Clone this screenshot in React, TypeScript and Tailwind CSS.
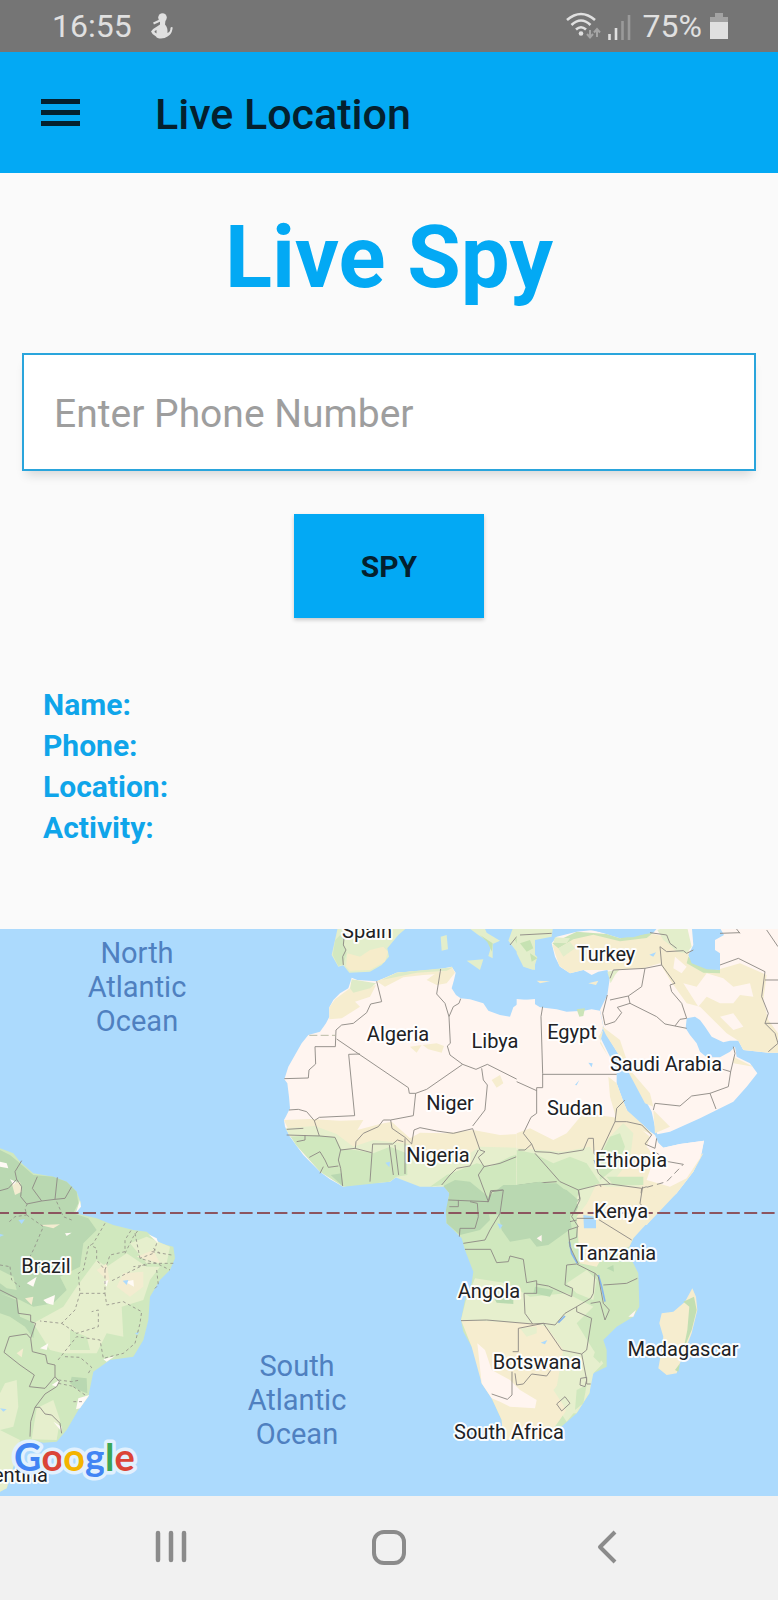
import React from "react";

const FONT = "font-['Roboto','Liberation_Sans',sans-serif]";

const labels: { text: string; x: number; y: number }[] = [
  { text: "Spain", x: 367, y: 9 },
  { text: "Turkey", x: 606, y: 32 },
  { text: "Algeria", x: 398, y: 112 },
  { text: "Libya", x: 495, y: 119 },
  { text: "Egypt", x: 572, y: 110 },
  { text: "Saudi Arabia", x: 666, y: 142 },
  { text: "Niger", x: 450, y: 181 },
  { text: "Sudan", x: 575, y: 186 },
  { text: "Nigeria", x: 438, y: 233 },
  { text: "Ethiopia", x: 631, y: 238 },
  { text: "Kenya", x: 621, y: 289 },
  { text: "Tanzania", x: 616, y: 331 },
  { text: "Angola", x: 489, y: 369 },
  { text: "Botswana", x: 537, y: 440 },
  { text: "Madagascar", x: 683, y: 427 },
  { text: "South Africa", x: 509, y: 510 },
  { text: "Brazil", x: 46, y: 344 },
];

const oceans: { lines: string[]; x: number; y: number }[] = [
  { lines: ["North", "Atlantic", "Ocean"], x: 137, y: 34 },
  { lines: ["South", "Atlantic", "Ocean"], x: 297, y: 447 },
];

const border = { fill: "none", stroke: "#8f8b85", strokeWidth: 2.8, strokeLinejoin: "round" as const };
const stateLine = { ...border, strokeDasharray: "9 8", strokeWidth: 2.4 };

function NorthWestAfrica() {
  return (
    <g transform="translate(270 -9) scale(.33333)">
      <path fill="#e3eecb" d="M205 15L195 60 185 105 205 140 220 136 238 158 300 155 335 135 357 110 352 85 385 45 420 15Z" />
      <path fill="#f6ecca" d="M232 100L270 110 300 90 340 80 354 95 345 125 300 150 240 152 228 140Z" />
      <path fill="#d3e8c0" d="M196 60L225 30 222 75 230 100 220 132 205 138 188 105Z" />
      <path fill="#e3eecb" d="M512 50L530 45 534 88 515 92ZM585 15L625 45 652 62 662 85 655 108 668 115 668 72 690 62 650 38 640 15ZM590 122L640 118 630 150ZM715 62L732 15H795V150L765 140 768 122 738 92Z" />
      <path fill="#c6e2b2" d="M630 45L668 70 666 95 652 66ZM735 60L760 30 780 50 775 95 750 88Z" />
      <path fill="#fff5f0" d="M245 173L262 180 320 184 350 172 380 158 420 155 470 155 510 147 545 140 557 158 552 180 545 205 558 225 572 235 600 238 640 250 655 272 690 285 720 290 730 262 760 240 795 237V910H530L535 840 538 820 520 795 490 800 470 790 445 768 420 765 380 770 360 785 300 790 260 790 220 800 180 778 150 755 120 725 100 705 78 675 60 650 45 620 42 600 50 585 60 565 57 530 52 490 43 478 55 440 75 405 95 370 115 345 150 335 168 310 178 290 178 262 190 240 210 220 235 205 240 190Z" />
      <path fill="#f6edcf" d="M240 205L318 196 300 230 255 245 270 260 215 295 178 298 178 262 195 238ZM320 184L380 158 510 147 505 162 460 165 400 172 345 200ZM490 165L545 140 555 158 530 190 500 195 470 180ZM420 380L455 375 440 398ZM458 375L500 370 522 378 515 398 475 388ZM665 480L690 465 700 490 680 503Z" />
      <path fill="#deebc7" d="M240 205L245 178 318 190 300 205 250 218ZM335 180L380 158 550 142 530 152 440 158Z" />
      <path fill="#f6edcf" d="M42 600L120 597 210 602 280 600 262 630 330 612 365 605 420 655 450 638 530 640 610 630 690 645 795 640V740L640 745 500 780 420 700 250 700 60 640Z" />
      <path fill="#e6efcd" d="M47 625L135 618 200 642 250 680 310 660 420 672 420 700 600 700 630 680 795 685V800H450L60 650Z" />
      <path fill="#d0e8be" d="M62 650L140 645 195 652 215 688 255 690 310 700 360 680 410 700 412 765 380 770 360 785 220 800 150 755 78 675ZM480 800L530 765 570 750 620 730 660 740 720 710 795 685V910H530L538 820 520 795Z" />
      <path fill="#b9d8b1" d="M538 820L520 798 555 780 600 785 655 830 700 795 795 795V910H530ZM182 765L215 760 218 798Z" />
      <path fill="#acdafd" d="M346 728L360 725 358 742Z" />
      <path {...border} d="M320 184L335 245 302 252 290 278 250 310 215 315 198 330 196 380 135 380 137 432 117 450 115 474 43 476M200 357L415 503 418 520 437 520 470 508 578 433 540 405 532 378 541 370 537 290 525 250 500 222 512 147M537 290L550 260 567 250 572 236M578 433L618 448 652 433 795 505M635 445L640 480 652 495 645 570 608 618M437 520L430 587 362 600 366 625 405 652 425 672 432 630 450 623 500 633 550 640 608 626 630 690 645 695 625 712 642 740 690 730 740 710 795 685M270 402L236 403 254 587 148 592 133 602 110 575 85 568 57 570M133 602L148 648 50 645M148 648L195 652 212 690 255 685 305 698M362 600L340 600 325 620 280 640 258 665 256 685M308 672L300 785M308 672L368 672 382 660 400 665M358 675L370 765M375 675L386 765M405 655L405 762M212 690L205 720 212 745 218 798M160 740L150 760M118 712L150 695 165 720 175 742 205 738M80 665L105 660 105 645M50 628L100 625M515 795L540 765 560 745 600 738 625 690M642 740L625 765 655 845 542 838M655 845L665 815 700 810M535 862L565 862 565 840M600 838L605 850 620 852 620 900M222 55L220 75 228 90 218 110 220 135M720 75L740 50 780 40" />
      <path {...border} strokeDasharray="24 10" stroke="#b5b79f" d="M118 346H196" />
    </g>
  );
}

function NorthEastAfrica() {
  return (
    <g transform="translate(520 -9) scale(.33333)">
      <path fill="#fff5f0" d="M-10 237L25 240 60 262 110 268 140 275 190 272 215 268 240 272 250 320 240 350 270 410 290 460 290 490 310 545 325 580 370 620 405 645 415 668 430 683 480 672 552 662 545 700 520 755 470 820 420 860 380 915H-10Z" />
      <path fill="#fff5f0" d="M95 70L110 50 170 35 220 30 260 42 300 55 360 52 400 38 420 15H795V398H745L670 390 655 362 630 362 610 367 575 350 555 320 540 300 525 290 500 295 497 325 510 345 530 370 540 395 560 412 600 412 630 395 645 380 650 410 690 430 712 460 680 500 640 545 590 570 540 595 450 635 412 643 405 620 395 575 360 510 330 460 300 410 260 345 250 318 240 270 262 225 270 170 262 150 235 155 215 165 190 150 150 160 120 140 105 110Z" />
      <path fill="#f6edcf" d="M97 75L170 40 260 45 300 60 400 42 480 60 520 110 540 130 590 150 660 130 740 165 730 240 745 300 774 340V398H745L670 390 655 362 620 340 580 300 540 260 500 250 450 180 420 130 370 145 270 150 190 150 150 160 118 138Z" />
      <path fill="#fff5f0" d="M490 190L530 200 560 160 610 175 640 200 690 190 700 230 660 225 640 250 600 250 560 230 535 260ZM600 290L640 280 670 320 640 330ZM465 110L500 140 485 160 460 145Z" />
      <path fill="#f6edcf" d="M245 318L300 360 330 450 390 520 400 560 375 550 330 465 300 410 258 345ZM400 570L450 620 405 640ZM640 410L700 440 640 430ZM265 470L290 490 320 570 370 615 400 645 290 600 270 530ZM250 330L235 350 265 410 240 370Z" />
      <path fill="#cbe4b8" d="M97 70L170 35 260 42 300 55 400 38 380 54 300 64 220 44 160 58 115 85ZM170 268L195 265 190 288 178 290ZM505 110L540 138 600 150 600 160 550 158 500 130Z" />
      <path fill="#e3eecb" d="M412 30L440 20 500 15 515 80 500 100 470 95 450 75 430 60ZM262 155L300 147 285 165 272 190ZM115 85L150 65 165 85 130 110Z" />
      <path fill="#e3eecb" d="M-10 15H100L95 50 45 60 32 90 52 112 40 150 10 140 -10 100ZM105 52L150 55 140 70 100 68Z" />
      <path fill="#c6e2b2" d="M0 70L30 60 40 85 20 95ZM30 100L52 115 35 125Z" />
      <path fill="#acdafd" d="M120 15L200 15 400 20 385 38 340 52 295 52 250 38 200 28 130 40ZM515 15H595L612 45 585 60 585 90 600 100 600 150 560 148 515 130 505 105 520 75ZM388 104L408 97 400 110Z" />
      <path fill="#f6edcf" d="M50 182L90 184 60 190ZM205 190L235 182 228 195ZM-10 640L30 625 100 660 140 640 190 580 270 590 330 600 390 650 380 680 420 720 400 780 550 700 520 755 470 820 380 915H-10Z" />
      <path fill="#fff5f0" d="M412 668L430 683 480 672 552 662 540 715 500 775 450 800 380 780 400 720 385 680Z" />
      <path fill="#e6efcd" d="M-10 685L60 690 130 695 210 680 230 720 260 660 310 610 340 640 330 720 290 770 370 800 260 800 230 790 170 915H-10Z" />
      <path fill="#d0e8be" d="M-10 690L40 700 100 730 150 710 200 730 240 790 180 810 160 860 190 915H-10ZM270 650L300 640 315 680 290 740 240 780 235 720ZM260 770L370 770 370 795 280 795Z" />
      <path fill="#b9d8b1" d="M-10 800L40 790 110 790 160 830 175 860 150 915H-10Z" />
      <path {...border} d="M68 260L63 290 68 460V503H50V580L33 592 10 640 35 672 15 690 -5 690M68 463H290M-10 485L50 512M35 672L45 695 90 697 115 702 190 690 205 655 220 655 222 700 235 715M45 700L120 785 175 810 235 795 270 792 365 805 380 800M175 810L180 835 155 860 155 900M235 715L245 690 285 605 320 605 365 615 395 645M285 605L290 565 315 540M395 645L375 672 405 685 410 655M405 695L445 725 490 733M222 720L235 760 270 792M365 805L360 850 380 880M240 795L250 815M-10 797L40 790 110 785M270 240L325 228 330 250 410 290 435 312 500 325M325 228L365 200 375 145 280 150 270 175M375 145L425 135 465 190 450 195 455 215 485 250 500 295 480 298 465 318M330 250L292 262 305 278 285 305 255 315 248 280 262 225M425 135L420 80 440 95 490 92 500 100 520 90M390 38L440 45 450 70 470 85M405 550L480 558 515 528 570 520 625 500 632 455 605 447M570 520L588 567M405 550L400 570M632 455L645 400 640 380M600 135L655 115 735 155 725 230 745 280 735 310 765 340 774 370 745 395M735 180H795M735 310H795M640 15L660 40M600 40L660 38M740 30L774 80M0 45L95 40" />
      <path {...border} strokeDasharray="20 12" d="M380 802L440 785 490 733" />
      <path fill="#acdafd" d="M205 428L218 430 215 442ZM165 495L178 480 170 496Z" />
    </g>
  );
}

function SouthernAfrica() {
  return (
    <g transform="translate(420 221) scale(.33333)">
      <path fill="#d0e8be" d="M90 195L470 190 690 195 680 210 640 265 628 290 635 330 655 370 658 470 640 500 590 530 550 570 560 600 560 650 520 670 510 690 508 730 470 790 430 825 380 865 250 870 245 810 215 745 185 700 175 640 155 590 130 545 123 510 135 450 155 400 160 365 135 300 125 265 80 220 78 185Z" />
      <path fill="#b9d8b1" d="M78 180L88 130 130 100 200 150 210 210 180 240 120 255 80 220ZM250 110L360 95 440 120 475 150 450 200 455 235 385 285 350 290 330 265 270 275 245 240 235 190Z" />
      <path fill="#e6efcd" d="M165 385L260 400 330 440 440 430 520 470 470 520 520 600 550 640 520 670 508 730 440 815 300 600 123 510 138 450ZM440 400L500 360 530 390 520 450 470 430Z" />
      <path fill="#f6edcf" d="M470 200L540 110 640 130 680 130 740 155 640 265 628 290 560 300 530 350 480 340ZM123 510L340 520 380 530 430 600 470 640 400 720 440 780 380 865 250 870 245 810 215 745 185 700 155 590Z" />
      <path fill="#e6efcd" d="M430 600L500 610 530 650 510 690 508 730 470 790 440 790 410 710ZM300 535L350 530 350 550 320 560Z" />
      <path fill="#d0e8be" d="M470 720L500 705 490 760 465 780ZM530 590L555 600 540 640 520 620Z" />
      <path fill="#fff5f0" d="M172 580L195 600 215 660 270 690 300 720 350 750 345 775 270 770 240 755 215 745 185 700ZM625 500L648 480 640 500ZM350 265L365 255 365 275Z" />
      <path fill="#b9dab0" d="M345 410L400 420 390 440 340 430ZM220 440L280 445 280 462 230 458ZM560 355L580 345 582 365Z" />
      <path fill="#f6edcf" d="M817 415L828 440 832 480 815 550 780 640 770 670 740 675 715 655 725 600 730 560 718 520 725 490 760 485 795 455Z" />
      <path fill="#c3dfb2" d="M822 440L830 480 815 540 790 600 802 540 808 470 790 455ZM780 640L775 665 765 660Z" />
      <path fill="#acdafd" d="M490 195L528 200 528 235 492 235ZM362 578L382 570 375 583ZM232 220L248 225 240 238Z" />
      <path fill="none" stroke="#83b4f0" strokeWidth="5" d="M448 275L455 310 472 340M535 375L545 410 555 455M415 518L435 498" />
      <path {...border} d="M85 150L205 155 212 122 250 120 240 190 210 240 195 270 130 280M150 155L172 160 175 200 165 235 120 235 118 260M88 170H115V150M135 298H212L230 338 265 335 270 318 310 328 320 398 350 392 350 430 312 430 315 490 338 522 370 520M123 512L200 510 338 522M350 402L385 408 455 440 458 415 435 405 440 345 470 342 525 370 520 430 512 445 470 470 435 490 405 525 370 520 425 600 485 612 500 600 515 505 470 485 470 470M525 370L535 380 550 460 568 480 555 510 540 455 512 460M550 405L620 400 652 385M475 120L480 150 455 200 475 230 445 240 450 290 475 342M470 205H530L635 270M450 215L470 210M448 270L470 262 472 230M295 605V535L370 520M278 605H295M276 665V735L262 748 215 732M285 670L290 705 310 702 335 672 380 678 400 650 425 655M485 612L500 690 495 710 480 705 482 685 500 682 500 702H512M410 762L435 740 450 760 425 783ZM668 110L660 160 680 185" />
    </g>
  );
}

function SouthAmerica() {
  return (
    <g transform="translate(0 191) scale(.33333)">
      <path fill="#d0e8be" d="M0 85L40 100 60 125 100 160 160 170 200 185 230 215 243 250 225 280 290 295 340 315 400 330 440 335 480 370 520 380 525 415 510 450 480 480 450 530 445 600 430 660 400 710 330 720 280 755 265 830 235 870 200 930 170 965 130 968 95 960 60 1000 40 1040 20 1105 0 1115Z" />
      <path fill="#b9d8b1" d="M0 90L30 105 60 130 100 165 160 170 200 185 230 215 235 250 220 280 265 295 290 330 250 370 240 440 180 470 200 510 160 550 100 560 60 540 0 520ZM0 520L50 540 60 590 105 610 100 655 75 620 30 590 0 580ZM215 770L260 775 262 820 235 810 210 790Z" />
      <path fill="#e6efcd" d="M230 500L190 560 100 610 150 690 190 700 290 700 320 640 370 650 365 560 430 540 450 480 480 440 440 440 380 400 320 440 290 420ZM15 790L50 780 55 860 40 920 0 930V820ZM110 865L160 840 180 900 170 960 95 958ZM0 930L60 960 40 1040 20 1105 0 1115ZM390 370L440 350 510 380 500 430 440 430Z" />
      <path fill="#d0e8be" d="M0 450L40 470 50 510 20 505 0 490ZM210 630L260 650 270 690 210 690Z" />
      <path fill="#f3ecd0" d="M35 190L60 185 65 215 45 225ZM75 535L100 530 95 555ZM120 315L180 313 160 325ZM50 700L70 685 65 712ZM370 460L430 455 430 500 390 530 350 500ZM290 450L320 430 330 490ZM410 410L460 390 480 430Z" />
      <path fill="#fffaf5" d="M0 125L20 130 25 145 0 140ZM80 490L110 470 100 500ZM130 540L165 525 160 555 140 550ZM30 178L50 185 40 195ZM120 685L145 670 140 690ZM195 340L215 338 200 348ZM445 343L470 355 475 370ZM240 240L243 260 228 278ZM375 485L400 480 402 500ZM235 835L268 825 240 865 228 868ZM155 795L178 780 170 800ZM160 905L185 920 185 935ZM310 485L325 480 320 500ZM310 718L345 708 320 725Z" />
      <path fill="#acdafd" d="M0 342L12 345 0 350ZM55 300L75 298 65 312ZM368 482L385 480 380 495ZM0 865L20 868 10 875ZM405 640L418 635 412 645Z" />
      <path {...border} d="M0 212L25 205 50 178 45 155 65 122M50 178L65 200 62 230 80 252 125 243 97 205 112 170M125 243L165 238 172 172M165 238L195 235 215 200M0 510L50 535 55 580 92 585 92 605 107 610 92 655 97 695 137 705 142 730 165 735 165 770 135 805 88 800 103 765 60 735 12 697 28 650 80 642 92 655M165 770L178 785 170 800 135 822 105 862 92 905 90 950M105 862L120 862 135 882 155 885 180 910 185 940" />
      <path {...stateLine} d="M28 305L45 290 80 285 75 265 82 252M80 285L130 320 100 390 90 410M170 245L190 290 215 300M30 440L35 480 60 500M0 435L30 440M315 310L280 370 265 380 250 450 235 460 240 520 315 520 315 450 290 420 290 385 270 375M315 450L330 405 375 395 375 360 395 328M375 400L400 350 415 330M405 340L420 415 470 430 510 450M470 370L460 400 420 415M455 395L515 405M460 385L480 400M520 430L440 430 360 470 330 485M470 450L475 495 460 510M440 435L400 440M240 520L225 570 185 610 120 603M185 610L230 640 295 620 295 570 275 575M315 520L320 555 370 545 425 575 420 610 405 670 370 700 310 715 300 660 230 650 170 725M195 710L240 712 275 742 265 760M175 790L225 800M175 780L215 785 240 780M220 800L255 825M220 845L250 845" />
    </g>
  );
}

function GoogleMark() {
  const letters: [string, string][] = [
    ["G", "#4285f4"],
    ["o", "#db4437"],
    ["o", "#f4b400"],
    ["g", "#4285f4"],
    ["l", "#3aa757"],
    ["e", "#db4437"],
  ];
  const type = "font-['Lato','Open_Sans',sans-serif] font-bold";
  return (
    <text x="14" y="542" fontSize="38" className={type} stroke="#e2f1fd" strokeWidth="7" strokeLinejoin="round" paintOrder="stroke">
      {letters.map(([char, color], i) => (
        <tspan key={i} fill={color}>{char}</tspan>
      ))}
    </text>
  );
}

function WorldMap() {
  return (
    <svg viewBox="0 0 778 567" preserveAspectRatio="xMidYMid slice" className="block h-full min-h-0 w-full" role="img" aria-label="Map">
      <rect width="778" height="567" fill="#acdafd" />
      <SouthAmerica />
      <NorthWestAfrica />
      <NorthEastAfrica />
      <SouthernAfrica />
      <line x1="0" x2="778" y1="284" y2="284" stroke="#8c5560" strokeWidth="2" strokeDasharray="13 4.4" strokeDashoffset="4" />
      <g fontSize="20" fill="#202124" textAnchor="middle" stroke="#fffffff0" strokeWidth="4" strokeLinejoin="round">
        {labels.map((l) => (
          <text key={l.text} x={l.x} y={l.y} paintOrder="stroke">{l.text}</text>
        ))}
        <text x="48" y="553" textAnchor="end" paintOrder="stroke">Argentina</text>
      </g>
      <g fontSize="29" fill="#4f80c0" textAnchor="middle">
        {oceans.map((o) =>
          o.lines.map((line, i) => (
            <text key={o.y + line} x={o.x} y={o.y + i * 34}>{line}</text>
          ))
        )}
      </g>
      <GoogleMark />
    </svg>
  );
}

function StatusBar() {
  return (
    <div className="flex h-[52px] shrink-0 items-center justify-between bg-[#757575] pr-[50px] pl-[52px] text-[32px] leading-none text-[#e0e0e0]">
      <div className="flex items-center gap-[18px]">
        <span>16:55</span>
        <svg width="24" height="26" viewBox="0 0 24 26" aria-hidden="true">
          <circle cx="12.500" cy="4.500" r="4.300" fill="#e0e0e0" />
          <path
            fill="#e0e0e0"
            fillRule="evenodd"
            d="M10 7H15.500L15 11.500Q18 14.500 17.500 20 20.500 19 20.500 15 20.500 14 22 14 23 14 22.500 16 21.500 21.500 17.500 23.500 15 25.500 11 25.500 7 25.500 6 23.500 2 21.500 1 18.500 3 15.500 7 13.500L10 11.500ZM6.500 17Q4 18 4.500 19L6.500 20.500Z"
          />
          <path d="M3.500 10.500L10 7.500" stroke="#e0e0e0" strokeWidth="2" />
        </svg>
      </div>
      <div className="flex items-center gap-2">
        <svg width="65" height="28" viewBox="0 0 65 28" fill="none" aria-hidden="true">
          <g stroke="#e0e0e0" strokeWidth="2.600">
            <path d="M1 8Q15 -4 29 8" />
            <path d="M5.500 13Q15 4 24.500 13" />
            <path d="M10 17.500Q15 13 20 17.500" />
          </g>
          <circle cx="15" cy="21.500" r="2.300" fill="#e0e0e0" />
          <path d="M24 18V25M21 22L24 25.500 27 22M31 25V17M28 20.500L31 17 34 20.500" stroke="#a5a5a5" strokeWidth="2" />
          <path d="M43.500 22V28M50 16V28" stroke="#e0e0e0" strokeWidth="2.600" />
          <path d="M56.500 9V28M63 3V28" stroke="#9a9a9a" strokeWidth="2.600" />
        </svg>
        <span className="pl-1">75%</span>
        <svg width="18" height="26" viewBox="0 0 18 26" aria-hidden="true">
          <path d="M5 0H13V4H18V10H0V4H5Z" fill="#a3a3a3" />
          <path d="M0 9H18V26H0Z" fill="#e0e0e0" />
        </svg>
      </div>
    </div>
  );
}

const fields = ["Name:", "Phone:", "Location:", "Activity:"];

export default function App() {
  return (
    <div className={`${FONT} flex min-h-screen flex-col bg-[#fafafa]`}>
      <StatusBar />
      <header className="flex h-[121px] shrink-0 items-center gap-[74px] bg-[#03a9f4] pl-10 text-[#04202e]">
        <button type="button" aria-label="Open menu" className="block">
          <svg width="41" height="28" viewBox="0 0 41 28" aria-hidden="true">
            <path d="M1 0H40V5H1ZM1 11H40V16H1ZM1 22H40V27H1Z" fill="#04202e" />
          </svg>
        </button>
        <h1 className="pt-[3px] text-[43px] leading-none font-medium">Live Location</h1>
      </header>

      <main className="flex flex-1 flex-col">
        <form className="flex flex-col items-center px-[22px] pt-8" onSubmit={(e) => e.preventDefault()}>
          <h2 className="text-[87px] leading-[104px] font-bold text-[#03a9f4]">Live Spy</h2>
          <input
            type="tel"
            aria-label="Phone number"
            placeholder="Enter Phone Number"
            className="mt-11 h-[118px] w-full rounded-none border-2 border-[#2aa5dc] bg-white px-[30px] pt-1 text-[39px] shadow-[0_8px_10px_-4px_rgba(0,0,0,0.14)] outline-none placeholder:text-[#9e9e9e]"
          />
          <button type="submit" className="mt-[43px] h-[104px] w-[190px] bg-[#03a9f4] text-[30px] font-bold text-[#04202e] shadow-[0_2px_4px_rgba(0,0,0,0.2)]">
            SPY
          </button>
        </form>
        <ul className="mt-[66px] mb-[81px] px-[43px] text-[30px] leading-[41px] font-bold text-[#0fa5ea]">
          {fields.map((f) => (
            <li key={f}>{f}</li>
          ))}
        </ul>
        <div className="flex min-h-[300px] flex-1 basis-0 flex-col overflow-hidden bg-[#acdafd]">
          <WorldMap />
        </div>
      </main>

      <nav aria-label="System" className="flex h-[104px] shrink-0 items-center justify-center gap-[181px] bg-[#f1f1f1] pb-[2px] text-[#8b8b8b]">
        <button type="button" aria-label="Recent apps">
          <svg width="36" height="36" viewBox="0 0 36 36" stroke="currentColor" strokeWidth="4.500" strokeLinecap="round" aria-hidden="true">
            <path d="M4 4V31M17 4V31M30 4V31" />
          </svg>
        </button>
        <button type="button" aria-label="Home">
          <svg width="36" height="36" viewBox="0 0 36 36" fill="none" stroke="currentColor" strokeWidth="4" aria-hidden="true">
            <rect x="3" y="3" width="30" height="31" rx="10" />
          </svg>
        </button>
        <button type="button" aria-label="Back">
          <svg width="36" height="36" viewBox="0 0 36 36" fill="none" stroke="currentColor" strokeWidth="4" strokeLinejoin="round" aria-hidden="true">
            <path d="M27 3L12 18 27 33" />
          </svg>
        </button>
      </nav>
    </div>
  );
}
